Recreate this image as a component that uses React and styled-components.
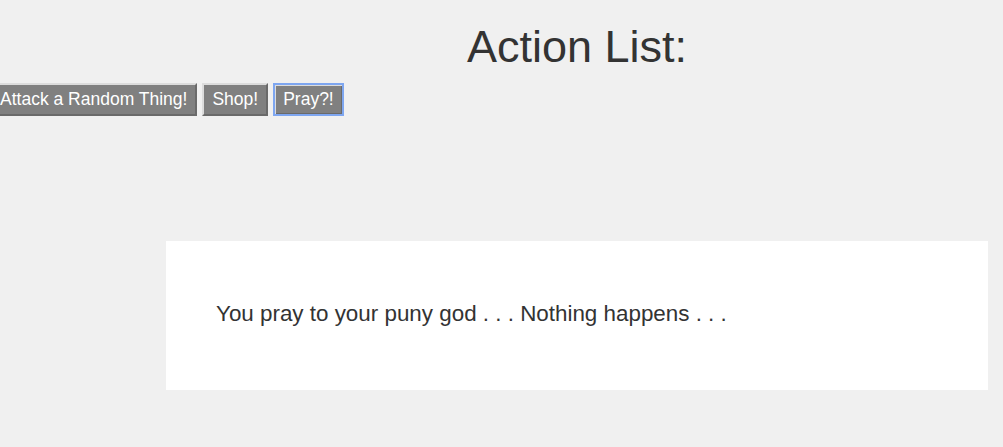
import React from 'react'
import styled, { createGlobalStyle } from 'styled-components'

const GlobalStyle = createGlobalStyle`
  body {
    margin: 0;
    background: #f0f0f0;
    font-family: 'Liberation Sans', Arial, sans-serif;
    color: #333;
  }
`

const actions = [
  { label: 'Attack a Random Thing!' },
  { label: 'Shop!' },
  { label: 'Pray?!', focused: true }
]

const App = () => {
  return (
    <Page>
      <GlobalStyle />
      <Title>Action List:</Title>
      <ButtonRow>
        {actions.map((action) => (
          <ActionButton key={action.label} $focused={action.focused}>
            {action.label}
          </ActionButton>
        ))}
      </ButtonRow>
      <MessageCard>You pray to your puny god . . . Nothing happens . . .</MessageCard>
    </Page>
  )
}

const Page = styled.div`
  display: flex;
  flex-direction: column;
  width: 1003px;
  height: 447px;
  overflow: hidden;
`

const Title = styled.h1`
  margin: 0 0 0 166px;
  padding-top: 21px;
  width: 822px;
  text-align: center;
  font-size: 45px;
  line-height: 52px;
  font-weight: 400;
  color: #333;
`

const ButtonRow = styled.div`
  display: flex;
  gap: 5px;
  margin: 10px 0 0 -10px;
`

const ActionButton = styled.button`
  font-family: 'Liberation Sans', Arial, sans-serif;
  font-size: 17.5px;
  line-height: 21px;
  padding: 4px 8px;
  color: #fff;
  background: #808080;
  border: 2px solid;
  border-color: ${({ $focused }) =>
    $focused ? '#7ea6f0' : '#dcdcdc #6a6a6a #6a6a6a #dcdcdc'};
  box-shadow: ${({ $focused }) =>
    $focused ? 'inset 1px 1px 0 #dcdcdc, inset -1px -1px 0 #6a6a6a' : 'none'};
  outline: none;
  cursor: pointer;
`

const MessageCard = styled.div`
  box-sizing: border-box;
  margin: 125px 0 0 166px;
  width: 822px;
  height: 149px;
  padding: 60px 50px 0;
  background: #fff;
  font-size: 22.4px;
  line-height: 25px;
  color: #333;
`

export default App
